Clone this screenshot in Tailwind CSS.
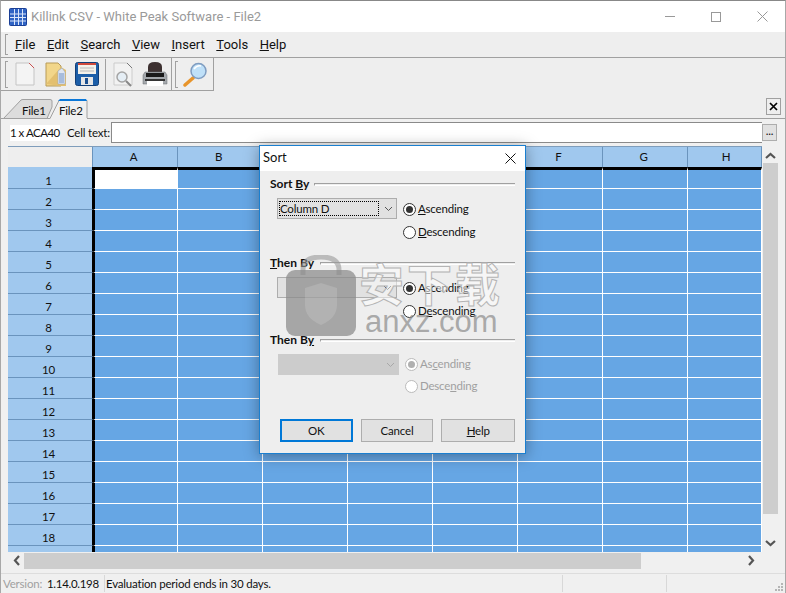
<!DOCTYPE html>
<html lang="en">
<head>
    <meta charset="UTF-8">
    <title>Killink CSV - White Peak Software - File2</title>
    <script src="https://cdn.jsdelivr.net/npm/@tailwindcss/browser@4"></script>
</head>
<body class="bg-[#f0f0f0]">
<div class="relative w-[786px] h-[593px] overflow-hidden flex flex-col bg-[#f0f0f0] border-x border-x-[#a8a8a8] border-t border-t-[#888888] text-[11.5px] tracking-[-0.2px] text-[#111111] whitespace-nowrap font-['Lato','Roboto',sans-serif]">

    <!-- Title bar -->
    <div class="h-[31px] shrink-0 bg-white flex items-center">
        <svg class="ml-[8px] w-[18px] h-[18px]" viewBox="0 0 18 18">
            <rect x="0.5" y="0.5" width="17" height="17" rx="1" fill="#2f63c4" stroke="#1a3f96"/>
            <path d="M1 6h16M1 9.500h16M1 13h16M5.500 1v16M9.500 1v16M13.500 1v16" stroke="#dbe6fa" stroke-width="1"/>
        </svg>
        <span class="ml-[4px] text-[13px] tracking-normal text-[#9a9a9a] font-['Roboto',sans-serif]">Killink CSV - White Peak Software - File2</span>
        <div class="ml-auto flex items-center">
            <div class="w-[46px] h-[31px] flex items-center justify-center"><div class="w-[10px] h-px bg-[#999999]"></div></div>
            <div class="w-[46px] h-[31px] flex items-center justify-center"><div class="w-[10px] h-[10px] border border-[#999999]"></div></div>
            <div class="w-[46px] h-[31px] flex items-center justify-center">
                <svg class="w-[11px] h-[11px]" viewBox="0 0 11 11"><path d="M0.500 0.500l10 10M10.500 0.500l-10 10" stroke="#999999" stroke-width="1"/></svg>
            </div>
        </div>
    </div>

    <!-- Menu bar -->
    <div class="h-[26px] shrink-0 bg-[#eeeeee] border-b border-[#a0a0a0] flex items-center">
        <div class="ml-[4px] w-[3px] h-[21px] border-l border-t border-b border-[#a0a0a0]"></div>
        <nav class="ml-[7px] flex gap-[11.5px] text-[13px] tracking-normal font-['Roboto',sans-serif]">
            <span><u>F</u>ile</span>
            <span><u>E</u>dit</span>
            <span><u>S</u>earch</span>
            <span><u>V</u>iew</span>
            <span><u>I</u>nsert</span>
            <span><u>T</u>ools</span>
            <span><u>H</u>elp</span>
        </nav>
    </div>

    <!-- Toolbar -->
    <div class="h-[33px] shrink-0 bg-[#eeeeee] flex items-stretch">
        <div class="w-[171px] h-[33px] border-b border-r border-[#a0a0a0] flex items-center">
            <div class="ml-[4px] w-[3px] h-[27px] border-l border-t border-b border-[#a0a0a0]"></div>
            <svg class="ml-[7px] w-[20px] h-[24px]" viewBox="0 0 20 24">
                <path d="M1 1h13l5 5v17H1z" fill="#f4f4f4" stroke="#c4c4c4"/>
                <path d="M14 1l5 5" stroke="#c85050"/>
            </svg>
            <svg class="ml-[10px] w-[22px] h-[25px]" viewBox="0 0 22 25">
                <path d="M1 1h12l3 3v20H1z" fill="#f2d68a" stroke="#b89b58"/>
                <path d="M1 22l15 2h5V8l-5-3z" fill="#e3c070"/>
                <path d="M13 9l4-3 3 4v12h-7z" fill="#dfe6f2" stroke="#8fa3c0" stroke-width="0.500"/>
                <path d="M14 12h5M14 14h5M14 16h5M14 18h5M14 20h5" stroke="#6e92c8"/>
            </svg>
            <svg class="ml-[8px] w-[24px] h-[24px]" viewBox="0 0 24 24">
                <rect x="0.500" y="0.500" width="23" height="23" rx="2" fill="#1c5ea8" stroke="#123f78"/>
                <rect x="3" y="1" width="18" height="11" fill="#f4f1ea"/>
                <rect x="3" y="1" width="18" height="2" fill="#d04a3c"/>
                <path d="M5 6h14M5 9h14" stroke="#b9b9b9"/>
                <rect x="6" y="15" width="12" height="8" fill="#e6e6e6"/>
                <rect x="10" y="16" width="3" height="6" fill="#1c4f8e"/>
            </svg>
            <div class="ml-[6px] w-px h-[31px] bg-[#a0a0a0]"></div>
            <svg class="ml-[7px] w-[22px] h-[25px]" viewBox="0 0 22 25">
                <path d="M1 1h13l5 5v17H1z" fill="#f2f2f2" stroke="#cccccc"/>
                <path d="M14 1l5 5" stroke="#777777"/>
                <circle cx="9" cy="15" r="5" fill="#e5eef5" stroke="#a4a4a4" stroke-width="1.500"/>
                <path d="M13 19l5 5" stroke="#888888" stroke-width="2"/>
            </svg>
            <svg class="ml-[7px] w-[26px] h-[25px]" viewBox="0 0 26 25">
                <path d="M6 11V5q0-5 7-5t7 5v6z" fill="#3d3131"/>
                <path d="M3 10h20l2 3v9H1v-9z" fill="#a4a8ac" stroke="#6a6d70" stroke-width="0.500"/>
                <rect x="4" y="11" width="18" height="4" fill="#1a1a1a"/>
                <path d="M3 18h20" stroke="#333333" stroke-width="2"/>
                <rect x="5" y="19" width="16" height="5" fill="#ffffff"/>
            </svg>
        </div>
        <div class="w-[42px] h-[33px] border-b border-r border-[#a0a0a0] flex items-center">
            <div class="ml-[3px] w-[3px] h-[27px] border-l border-t border-b border-[#a0a0a0]"></div>
            <svg class="ml-[5px] w-[25px] h-[25px]" viewBox="0 0 25 25">
                <path d="M10 16l-8 7" stroke="#e8942a" stroke-width="3.500" stroke-linecap="round"/>
                <circle cx="15.500" cy="9" r="7.500" fill="#bfe0f8" stroke="#7f9cc0" stroke-width="1.500"/>
                <path d="M11 7q3-4 7-3" stroke="#ffffff" stroke-width="1.500" fill="none"/>
            </svg>
        </div>
    </div>

    <!-- Tabs -->
    <div class="h-[28px] shrink-0 bg-[#eeeeee] border-b border-[#a0a0a0] relative">
        <svg class="absolute left-[2px] top-[8px] w-[85px] h-[20px]" viewBox="0 0 85 20">
            <path d="M0.500 19.500L18 1Q19 0.500 20 0.500H47Q49 0.500 49 2V8L44 19.500z" fill="#dcdcdc" stroke="#a0a0a0"/>
            <path d="M47 19.500L56 1.500H84V19.500" fill="#f0f0f0" stroke="#a0a0a0"/>
            <path d="M47.500 19.500H84" stroke="#f0f0f0"/>
            <path d="M55 2L57 0H83L84 2z" fill="#0b78d8"/>
        </svg>
        <span class="absolute left-[21px] top-[12px] leading-[16px]">File1</span>
        <span class="absolute left-[58px] top-[12px] leading-[16px]">File2</span>
        <div class="absolute right-[4px] top-[7px] w-[15px] h-[17px] border border-[#a0a0a0] flex items-center justify-center">
            <svg class="w-[9px] h-[9px]" viewBox="0 0 9 9"><path d="M1 1l7 7M8 1l-7 7" stroke="#000000" stroke-width="1.700"/></svg>
        </div>
    </div>

    <!-- Cell text row -->
    <div class="h-[27px] shrink-0 flex items-center">
        <span class="ml-[9px] w-[50px] bg-white leading-[16px] tracking-[-0.5px]">1 x ACA40</span>
        <span class="ml-[7px] w-[44px]">Cell text:</span>
        <div class="w-[651px] h-[21px] bg-white border-y border-l border-[#8a8a8a]"></div>
        <div class="w-[15px] h-[17px] bg-[#e1e1e1] border border-[#adadad] flex items-center justify-center leading-none pb-[3px]">...</div>
    </div>

    <!-- Grid with scroll bars -->
    <div class="flex h-[406px] shrink-0 pl-[7px]">
        <div id="grid" class="w-[754px] h-[406px] overflow-hidden bg-[#66a6e4] border-t border-[#7f9dbb]"></div>
        <div class="w-[16px] flex flex-col items-center">
            <svg class="mt-[6px] w-[11px] h-[7px]" viewBox="0 0 11 7"><path d="M1 6l4.500-4 4.500 4" fill="none" stroke="#555555" stroke-width="2.200"/></svg>
            <div class="mt-[4px] w-[15px] h-[351px] bg-[#cdcdcd]"></div>
            <svg class="mt-[26px] w-[11px] h-[7px]" viewBox="0 0 11 7"><path d="M1 1l4.500 4 4.500-4" fill="none" stroke="#555555" stroke-width="2.200"/></svg>
        </div>
    </div>
    <div class="h-[17px] shrink-0 ml-[7px] flex items-center">
        <svg class="ml-[5px] w-[7px] h-[11px]" viewBox="0 0 7 11"><path d="M6 1L2 5.500 6 10" fill="none" stroke="#555555" stroke-width="2.200"/></svg>
        <div class="ml-[4px] w-[617px] h-[16px] bg-[#cdcdcd]"></div>
        <svg class="ml-[107px] w-[7px] h-[11px]" viewBox="0 0 7 11"><path d="M1 1l4 4.500L1 10" fill="none" stroke="#555555" stroke-width="2.200"/></svg>
    </div>

    <!-- Status bar -->
    <div class="mt-[4px] flex-1 border-t border-[#dddddd] flex items-center relative">
        <span class="ml-[2px] w-[44px] text-[#a0a0a0] leading-none">Version:</span>
        <span class="w-[57px] tracking-[-0.3px] leading-none">1.14.0.198</span>
        <div class="w-px h-[17px] bg-[#d8d8d8]"></div>
        <span class="ml-px leading-none">Evaluation period ends in 30 days.</span>
        <div class="absolute left-[561px] top-[1px] w-px h-[17px] bg-[#d8d8d8]"></div>
        <div class="absolute left-[665px] top-[1px] w-px h-[17px] bg-[#d8d8d8]"></div>
        <svg class="absolute right-[1px] bottom-px w-[9px] h-[9px]" viewBox="0 0 9 9"><path d="M6 0h2v2H6zM3 3h2v2H3zM6 3h2v2H6zM0 6h2v2H0zM3 6h2v2H3zM6 6h2v2H6z" fill="#b5b5b5"/></svg>
    </div>

    <!-- Sort dialog -->
    <div class="absolute left-[258px] top-[144px] w-[267px] h-[309px] bg-[#eeeeee] border border-[#1a7fd0] shadow-[0_2px_14px_rgba(0,0,0,0.35)] flex flex-col">
        <div class="h-[25px] shrink-0 bg-white flex items-center justify-between">
            <span class="ml-[3px] text-[13px] tracking-normal -mt-[2px]">Sort</span>
            <svg class="mr-[9px] w-[11px] h-[11px]" viewBox="0 0 11 11"><path d="M0.500 0.500l10 10M10.500 0.500l-10 10" stroke="#111111" stroke-width="1"/></svg>
        </div>
        <div class="flex-1 pl-[10px] pr-[10px] pt-[5px] flex flex-col">
            <!-- Sort By -->
            <section class="h-[79px] shrink-0">
                <div class="h-[16px] flex items-center font-bold leading-none text-[12px] tracking-normal">
                    <span>Sort <u>B</u>y</span>
                    <div class="ml-[5px] flex-1 h-[3px] border-l border-t border-b border-t-[#a0a0a0] border-l-[#a0a0a0] border-b-white"></div>
                </div>
                <div class="mt-[6px] flex">
                    <div class="ml-[7px] w-[120px] h-[21px] bg-[#e1e1e1] border border-[#adadad] flex items-center">
                        <div class="ml-px w-[100px] h-[15px] border border-dotted border-black flex items-center leading-none">Column D</div>
                        <svg class="ml-[5px] w-[9px] h-[6px]" viewBox="0 0 9 6"><path d="M1 1l3.500 3.500L8 1" fill="none" stroke="#555555"/></svg>
                    </div>
                    <div class="ml-[6px] flex flex-col gap-[9px] pt-[4px]">
                        <label class="flex items-center gap-[2px] h-[14px]">
                            <span class="w-[13px] h-[13px] rounded-full bg-white border border-[#333333] flex items-center justify-center"><span class="w-[7px] h-[7px] rounded-full bg-[#333333]"></span></span>
                            <span><u>A</u>scending</span>
                        </label>
                        <label class="flex items-center gap-[2px] h-[14px]">
                            <span class="w-[13px] h-[13px] rounded-full bg-white border border-[#333333]"></span>
                            <span><u>D</u>escending</span>
                        </label>
                    </div>
                </div>
            </section>
            <!-- Then By -->
            <section class="h-[77px] shrink-0">
                <div class="h-[16px] flex items-center font-bold leading-none text-[12px] tracking-normal">
                    <span><u>T</u>hen By</span>
                    <div class="ml-[6px] flex-1 h-[3px] border-l border-t border-b border-t-[#a0a0a0] border-l-[#a0a0a0] border-b-white"></div>
                </div>
                <div class="mt-[6px] flex">
                    <div class="ml-[7px] w-[120px] h-[21px] bg-[#e1e1e1] border border-[#adadad] flex items-center justify-end">
                        <svg class="mr-[4px] w-[9px] h-[6px]" viewBox="0 0 9 6"><path d="M1 1l3.500 3.500L8 1" fill="none" stroke="#555555"/></svg>
                    </div>
                    <div class="ml-[6px] flex flex-col gap-[9px] pt-[4px]">
                        <label class="flex items-center gap-[2px] h-[14px]">
                            <span class="w-[13px] h-[13px] rounded-full bg-white border border-[#333333] flex items-center justify-center"><span class="w-[7px] h-[7px] rounded-full bg-[#333333]"></span></span>
                            <span>A<u>s</u>cending</span>
                        </label>
                        <label class="flex items-center gap-[2px] h-[14px]">
                            <span class="w-[13px] h-[13px] rounded-full bg-white border border-[#333333]"></span>
                            <span>D<u>e</u>scending</span>
                        </label>
                    </div>
                </div>
            </section>
            <!-- Then By, disabled -->
            <section class="h-[87px] shrink-0">
                <div class="h-[16px] flex items-center font-bold leading-none text-[12px] tracking-normal">
                    <span>Then B<u>y</u></span>
                    <div class="ml-[6px] flex-1 h-[3px] border-l border-t border-b border-t-[#a0a0a0] border-l-[#a0a0a0] border-b-white"></div>
                </div>
                <div class="mt-[6px] flex">
                    <div class="ml-[8px] w-[121px] h-[21px] bg-[#cccccc] flex items-center justify-end">
                        <svg class="mr-[4px] w-[9px] h-[6px]" viewBox="0 0 9 6"><path d="M1 1l3.500 3.500L8 1" fill="none" stroke="#a8a8a8"/></svg>
                    </div>
                    <div class="ml-[6px] flex flex-col gap-[8px] pt-[3px] text-[#a0a0a0]">
                        <label class="flex items-center gap-[2px] h-[14px]">
                            <span class="w-[13px] h-[13px] rounded-full bg-white border border-[#bbbbbb] flex items-center justify-center"><span class="w-[7px] h-[7px] rounded-full bg-[#b0b0b0]"></span></span>
                            <span>As<u>c</u>ending</span>
                        </label>
                        <label class="flex items-center gap-[2px] h-[14px]">
                            <span class="w-[13px] h-[13px] rounded-full bg-white border border-[#bbbbbb]"></span>
                            <span>Desce<u>n</u>ding</span>
                        </label>
                    </div>
                </div>
            </section>
            <!-- Buttons -->
            <div class="flex items-center">
                <button class="ml-[10px] w-[73px] h-[23px] bg-[#e1e1e1] border-2 border-[#0078d7] leading-none">OK</button>
                <button class="ml-[8px] w-[73px] h-[23px] bg-[#e1e1e1] border border-[#adadad] leading-none">Cancel</button>
                <button class="ml-[8px] w-[74px] h-[23px] bg-[#e1e1e1] border border-[#adadad] leading-none"><u>H</u>elp</button>
            </div>
        </div>
    </div>

    <!-- Watermark over the dialog -->
    <div class="absolute left-[284px] top-[254px] w-[220px] h-[84px] pointer-events-none">
        <svg class="absolute left-0 top-0 w-[72px] h-[84px]" viewBox="0 0 72 84">
            <path d="M18 20V15Q18 2 36 2T54 15V20" fill="none" stroke="#999999" stroke-opacity="0.6" stroke-width="5"/>
            <rect x="1" y="15" width="70" height="66" rx="9" fill="#8a8a8a" fill-opacity="0.72"/>
            <path d="M36 28l16 5v17q0 13-16 20-16-7-16-20V33z" fill="#ffffff" fill-opacity="0.14"/>
        </svg>
        <span class="absolute left-[74px] top-[0px] text-[45px] leading-[56px] tracking-[3px] font-['Noto_Sans_CJK_SC',sans-serif] font-bold text-white/50 [-webkit-text-stroke:1px_#b4b4b4]">安下载</span>
        <span class="absolute left-[80px] top-[47px] text-[31px] tracking-normal leading-[40px] text-[#8a8a8a]/70 font-['Liberation_Sans',sans-serif]">anxz.com</span>
    </div>
</div>

<script>
    // Build the sheet: header row, then the numbered rows
    const cols = ['A', 'B', 'C', 'D', 'E', 'F', 'G', 'H'];
    let html = '<div class="flex h-[20px]"><div class="w-[85px] h-[20px] shrink-0 bg-[#eeeeee] border-r border-[#6a94bd]"></div>';
    cols.forEach(function(c, i) {
        const width = i === 7 ? 'w-[74px] pl-[3px]' : 'w-[85px] pr-[3px]';
        html += '<div class="' + width + ' h-[20px] shrink-0 bg-[#a0c8ee] border-r border-[#6a94bd] flex items-center justify-center leading-none">' + c + '</div>';
    });
    html += '</div>';

    for (let r = 1; r <= 19; r++) {
        const first = r === 1;
        html += '<div class="flex ' + (first ? 'h-[22px]' : 'h-[21px]') + '">';
        html += '<div class="w-[85px] shrink-0 bg-[#a0c8ee] border-r border-r-black border-b border-b-[#6a94bd] text-center pr-[3px] leading-[16px] ' + (first ? 'pt-[6px]' : 'pt-[5px]') + '">' + r + '</div>';
        cols.forEach(function(c, i) {
            let cls = 'shrink-0 border-r border-b border-white ';
            cls += i === 7 ? 'w-[74px] ' : 'w-[85px] ';
            if (i === 0) cls += 'border-l-2 border-l-black ';
            if (first) cls += 'border-t-[3px] border-t-black ';
            cls += (first && i === 0) ? 'bg-white' : 'bg-[#66a6e4]';
            html += '<div class="' + cls + '"></div>';
        });
        html += '</div>';
    }
    document.getElementById('grid').innerHTML = html;
</script>
</body>
</html>
